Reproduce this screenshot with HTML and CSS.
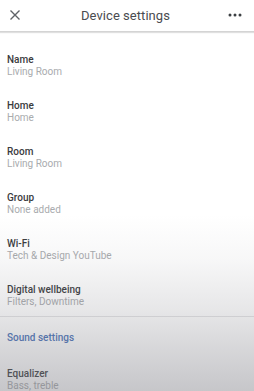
FILE: index.html
```html
<!DOCTYPE html>
<html>
<head>
<meta charset="utf-8">
<link rel="stylesheet" href="styles.css">
</head>
<body>
<div class="screen">
  <header class="topbar">
    <svg class="close" width="12" height="12" viewBox="0 0 12 12"><path d="M1.5 1.5 L10.5 10.5 M10.5 1.5 L1.5 10.5" stroke="#5f6368" stroke-width="1.4" fill="none"/></svg>
    <div class="title">Device settings</div>
    <svg class="more" width="14" height="4" viewBox="0 0 14 4"><circle cx="2" cy="2" r="1.5" fill="#3c4043"/><circle cx="7" cy="2" r="1.5" fill="#3c4043"/><circle cx="12" cy="2" r="1.5" fill="#3c4043"/></svg>
  </header>
  <section class="list">
    <div class="item"><div class="label">Name</div><div class="sub">Living Room</div></div>
    <div class="item"><div class="label">Home</div><div class="sub">Home</div></div>
    <div class="item"><div class="label">Room</div><div class="sub">Living Room</div></div>
    <div class="item"><div class="label">Group</div><div class="sub">None added</div></div>
    <div class="item"><div class="label">Wi-Fi</div><div class="sub">Tech &amp; Design YouTube</div></div>
    <div class="item"><div class="label">Digital wellbeing</div><div class="sub">Filters, Downtime</div></div>
  </section>
  <section class="list second">
    <div class="heading">Sound settings</div>
    <div class="item"><div class="label">Equalizer</div><div class="sub">Bass, treble</div></div>
  </section>
  <div class="shade"></div>
</div>
</body>
</html>
```

FILE: styles.css
```css
* { box-sizing: border-box; }
html, body { margin: 0; padding: 0; }
body {
  width: 254px;
  height: 391px;
  overflow: hidden;
  font-family: Roboto, "Liberation Sans", sans-serif;
  background: #fff;
}
.screen {
  position: relative;
  width: 254px;
  height: 391px;
  display: flex;
  flex-direction: column;
}
.topbar {
  height: 32px;
  flex: none;
  display: flex;
  align-items: center;
  justify-content: space-between;
  padding: 0 12px 1px 9px;
  background: #fff;
  border-bottom: 1px solid #d4d4d4;
  box-shadow: 0 1px 1px rgba(0,0,0,0.12);
}
.title {
  font-size: 13px;
  color: #4a4c50;
  letter-spacing: 0.05px;
  margin-left: 2px;
}
.list {
  display: flex;
  flex-direction: column;
  gap: 22px;
  padding: 22px 7px 8px;
  border-bottom: 1px solid #e4e4e6;
}
.list.second {
  border-bottom: none;
  padding-top: 15px;
  gap: 24px;
}
.item {
  display: flex;
  flex-direction: column;
}
.label {
  font-size: 10px;
  line-height: 12px;
  font-weight: 500;
  color: #3a3b3e;
}
.sub {
  font-size: 10px;
  line-height: 12px;
  color: #a9abae;
}
.heading {
  font-size: 10px;
  line-height: 12px;
  font-weight: 500;
  color: #4a72b8;
}
.shade {
  position: absolute;
  left: 0;
  right: 0;
  top: 0;
  bottom: 0;
  pointer-events: none;
  background: linear-gradient(to bottom,
    rgba(120,120,128,0) 0px,
    rgba(120,120,128,0) 215px,
    rgba(120,120,128,0.06) 260px,
    rgba(120,120,128,0.18) 310px,
    rgba(120,120,128,0.30) 350px,
    rgba(120,120,128,0.42) 391px);
}
```
